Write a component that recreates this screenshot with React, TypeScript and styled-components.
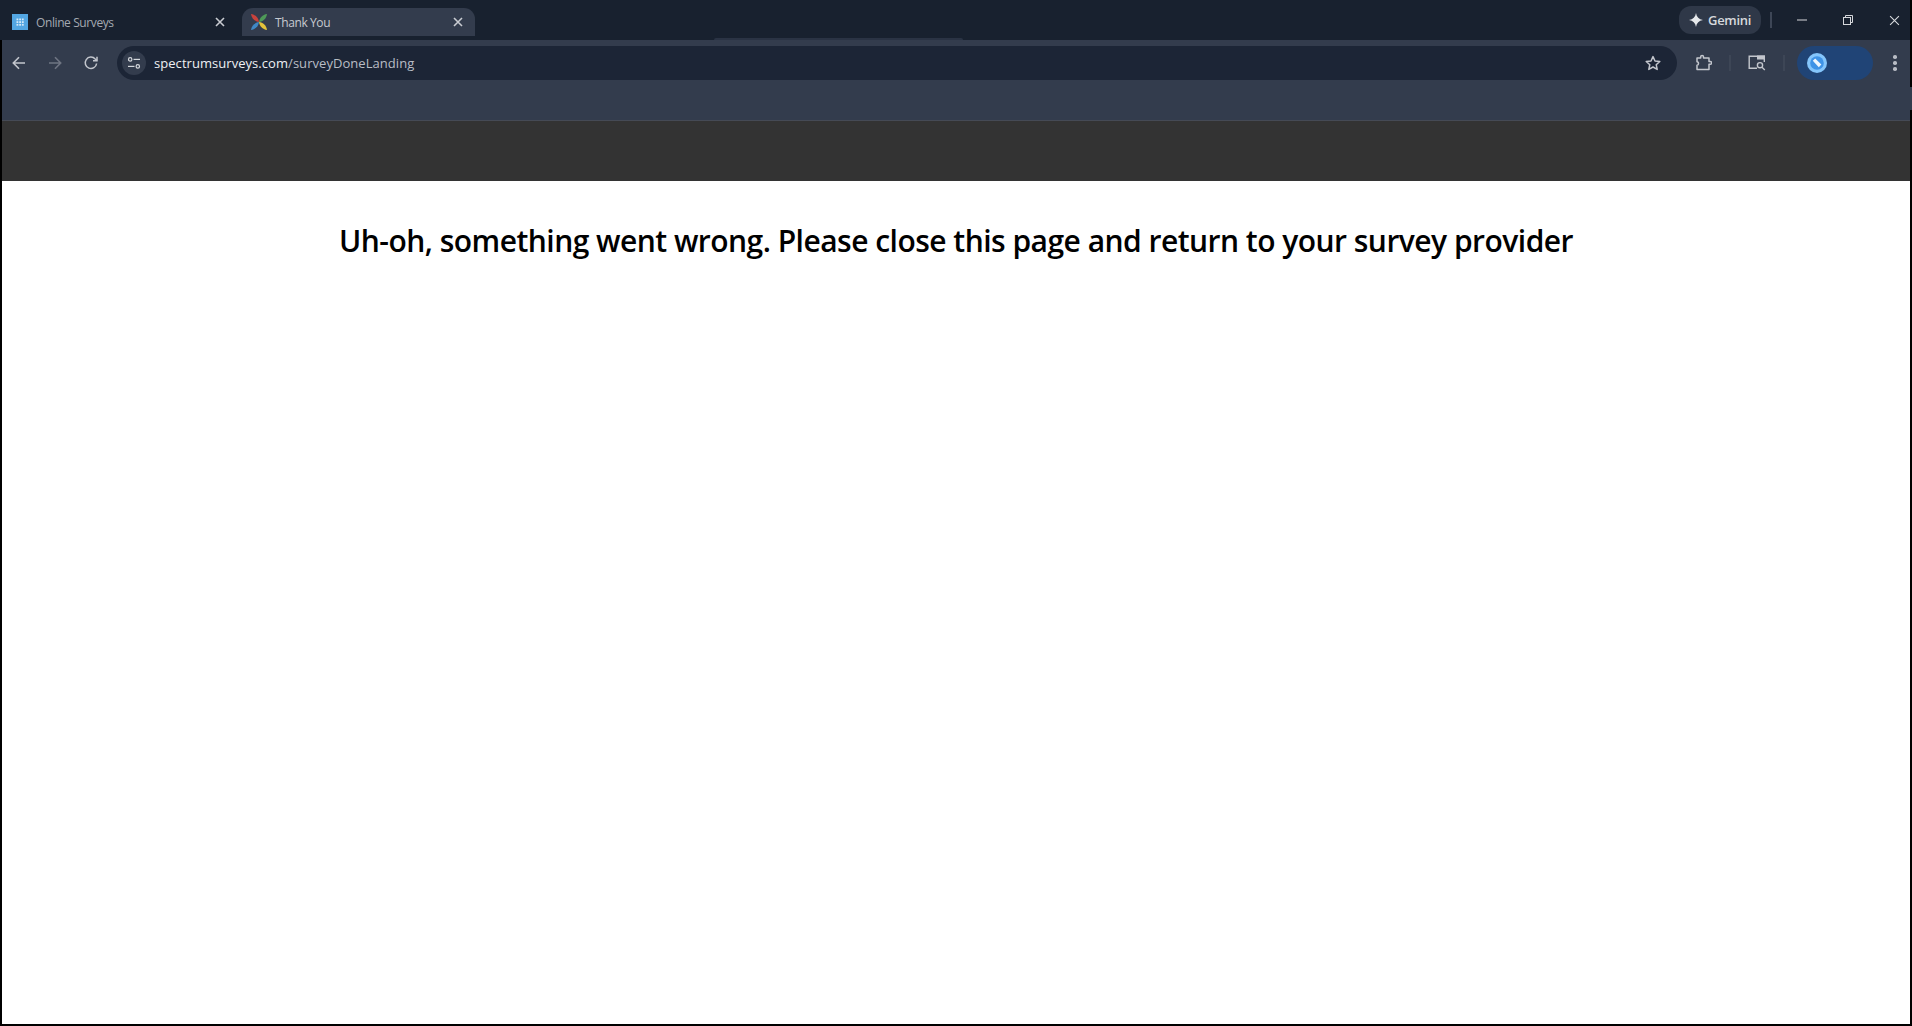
import React from 'react'
import styled, { createGlobalStyle } from "styled-components";

const GlobalStyle = createGlobalStyle`
    html, body {
        margin: 0;
        padding: 0;
        background: #000;
    }
    body {
        font-family: "Open Sans", "Noto Sans", sans-serif;
        overflow: hidden;
    }
`;

const Screen = styled.div`
    position: relative;
    width: 1912px;
    height: 1026px;
    background: #000;
    display: flex;
    flex-direction: column;
    overflow: hidden;

    /* black sliver over the title bar, and the toolbar peeking out on the right */
    &::before {
        content: "";
        position: absolute;
        top: 0;
        left: 1514px;
        width: 398px;
        height: 2px;
        background: #000;
    }
    &::after {
        content: "";
        position: absolute;
        top: 87px;
        right: 0;
        width: 2px;
        height: 23px;
        background: #333c4d;
    }
`;

const TitleBar = styled.div`
    width: 1910px;
    height: 40px;
    flex: none;
    background: #18212f;
    display: flex;
    position: relative;
`;

const TabBump = styled.div`
    position: absolute;
    left: 714px;
    bottom: 0;
    width: 249px;
    height: 2px;
    background: #2a3344;
    border-radius: 2px 2px 0 0;
`;

const Tab = styled.div<{ $active?: boolean }>`
    box-sizing: border-box;
    width: ${(props) => props.$active ? "233px" : "242px"};
    height: 28px;
    margin-top: 8px;
    padding: ${(props) => props.$active ? "0 12px 0 8px" : "0 17px 0 12px"};
    display: flex;
    align-items: center;
    background: ${(props) => props.$active ? "#333c4d" : "transparent"};
    border-radius: 11px 11px 0 0;
    color: ${(props) => props.$active ? "#c7cad0" : "#a4a9b2"};
    font-size: 12px;
    letter-spacing: -0.4px;
`;

const TabTitle = styled.span<{ $active?: boolean }>`
    flex: 1;
    margin-left: ${(props) => props.$active ? "7px" : "8px"};
    white-space: nowrap;
`;

const CaptionArea = styled.div`
    margin-left: auto;
    margin-right: -7px;
    display: flex;
    align-items: center;
    height: 40px;
`;

const GeminiPill = styled.div`
    box-sizing: border-box;
    width: 82px;
    height: 28px;
    border-radius: 12px;
    background: #2f3848;
    color: #d6d8dc;
    display: flex;
    align-items: center;
    gap: 5px;
    padding-left: 10px;
    font-size: 13px;
    font-weight: 600;
    letter-spacing: -0.3px;
`;

const VSep = styled.div`
    width: 2px;
    height: 16px;
    background: #3d4656;
    flex: none;
`;

const CaptionSep = styled(VSep)`
    margin: 0 7px 0 9px;
`;

const CaptionButton = styled.div`
    width: 46px;
    height: 40px;
    display: flex;
    align-items: center;
    justify-content: center;
`;

const ChromeArea = styled.div`
    width: 1908px;
    margin-left: 2px;
    flex: none;
`;

const Toolbar = styled.div`
    box-sizing: border-box;
    height: 80px;
    padding-top: 6px;
    background: #333c4d;
    display: flex;
    align-items: flex-start;
`;

const NavButtons = styled.div`
    display: flex;
    align-items: center;
    height: 34px;
    padding-left: 8px;
    gap: 18px;
    width: 115px;
    flex: none;
    box-sizing: border-box;
`;

const IconBox = styled.div`
    width: 18px;
    height: 18px;
    display: flex;
    align-items: center;
    justify-content: center;
    flex: none;
`;

const Omnibox = styled.div`
    box-sizing: border-box;
    width: 1560px;
    height: 34px;
    flex: none;
    border-radius: 17px;
    background: #1c2536;
    display: flex;
    align-items: center;
    padding: 0 16px 0 5px;
`;

const SiteChip = styled.div`
    width: 24px;
    height: 24px;
    border-radius: 50%;
    background: #333c4d;
    display: flex;
    align-items: center;
    justify-content: center;
    flex: none;
`;

const Url = styled.div`
    flex: 1;
    margin-left: 8px;
    font-size: 13px;
    letter-spacing: 0.05px;
    color: #b9bdc5;
    white-space: nowrap;
`;

const Host = styled.span`
    color: #eef0f3;
`;

const ToolIcons = styled.div`
    display: flex;
    align-items: center;
    height: 34px;
    flex: none;
    margin: 0 12px 0 17px;
`;

const ToolSep = styled(VSep)`
    margin: 0 17px;

    &:last-child {
        margin-right: 0;
    }
`;

const ProfilePill = styled.div`
    box-sizing: border-box;
    width: 76px;
    height: 34px;
    flex: none;
    border-radius: 17px;
    background: #204476;
    display: flex;
    align-items: center;
    padding-left: 10px;
`;

const MenuDots = styled.div`
    margin-left: 15px;
    width: 14px;
    height: 34px;
    flex: none;
    display: flex;
    flex-direction: column;
    align-items: center;
    justify-content: center;
    gap: 2.5px;

    span {
        width: 3.5px;
        height: 3.5px;
        border-radius: 50%;
        background: #b8bcc4;
    }
`;

const BookmarkBand = styled.div`
    height: 60px;
    background: #333333;
    border-top: 1px solid #454a55;
`;

const Page = styled.main`
    width: 1908px;
    height: 843px;
    margin-left: 2px;
    flex: none;
    background: #fff;
    padding-top: 38px;
    box-sizing: border-box;
`;

const Message = styled.h1`
    margin: 0;
    text-align: center;
    font-size: 30px;
    line-height: 44px;
    font-weight: 600;
    letter-spacing: -0.52px;
    color: #000;
`;

const GridFavicon = () => (
    <svg width="16" height="16" viewBox="0 0 16 16">
        <rect width="16" height="16" fill="#53a6e2" />
        {[4.5, 7.2, 9.9].map((y) =>
            [4.5, 7.2, 9.9].map((x) => (
                <rect key={`${x}-${y}`} x={x} y={y} width="1.8" height="1.8" fill="#d5e9f8" />
            ))
        )}
    </svg>
);

const PinwheelFavicon = () => (
    <svg width="18" height="18" viewBox="0 0 18 18">
        <path d="M9 9C5 8.5 1.5 5.5 1 1C5.5 1.5 8.5 5 9 9Z" fill="#c8423c" />
        <path d="M9 9C9.5 5 12.5 1.5 17 1C16.5 5.5 13 8.5 9 9Z" fill="#4e9a58" />
        <path d="M9 9C13 9.5 16.5 12.5 17 17C12.5 16.5 9.5 13 9 9Z" fill="#e3c23a" />
        <path d="M9 9C8.5 13 5.5 16.5 1 17C1.5 12.5 5 9.5 9 9Z" fill="#3f88c5" />
    </svg>
);

const CloseIcon = ({ size = 10, color = "#c9ccd2", weight = 1.6 }: { size?: number; color?: string; weight?: number }) => (
    <svg width={size} height={size} viewBox="0 0 10 10">
        <path d="M1 1L9 9M9 1L1 9" stroke={color} strokeWidth={weight} fill="none" />
    </svg>
);

const BackIcon = ({ color }: { color: string }) => (
    <svg width="16" height="16" viewBox="0 0 16 16" fill="none" stroke={color} strokeWidth="1.6">
        <path d="M14 8H2.5M8 2.2L2.3 8L8 13.8" />
    </svg>
);

const ForwardIcon = ({ color }: { color: string }) => (
    <svg width="16" height="16" viewBox="0 0 16 16" fill="none" stroke={color} strokeWidth="1.6">
        <path d="M2 8H13.5M8 2.2L13.7 8L8 13.8" />
    </svg>
);

const ReloadIcon = () => (
    <svg width="16" height="16" viewBox="0 0 16 16" fill="none" stroke="#c3c6cd" strokeWidth="1.5">
        <path d="M13.6 8.5A5.7 5.7 0 1 1 12.2 4L14 5.6" />
        <path d="M14 1.8V5.8H10" />
    </svg>
);

const TuneIcon = () => (
    <svg width="14" height="14" viewBox="0 0 14 14" fill="none" stroke="#d5d8dd" strokeWidth="1.2">
        <circle cx="3.2" cy="3.4" r="1.7" />
        <path d="M6.5 3.4H13" />
        <circle cx="10.8" cy="10.4" r="1.7" />
        <path d="M1 10.4H7.5" />
    </svg>
);

const StarIcon = () => (
    <svg width="16" height="16" viewBox="0 0 16 16" fill="none" stroke="#c3c6cd" strokeWidth="1.5" strokeLinejoin="round">
        <path d="M8 1.6L10 6L14.8 6.5L11.2 9.7L12.2 14.4L8 12L3.8 14.4L4.8 9.7L1.2 6.5L6 6Z" />
    </svg>
);

const ExtensionIcon = () => (
    <svg width="18" height="18" viewBox="0 0 18 18" fill="none" stroke="#c3c6cd" strokeWidth="1.5" strokeLinejoin="round">
        <path d="M3 4H6.7V2.8A1.4 1.4 0 0 1 9.5 2.8V4H15V7.5H16.2A1.4 1.4 0 0 1 16.2 10.3H15V15.5H3V11.2C5 11.2 5 7.8 3 7.8Z" />
    </svg>
);

const TabSearchIcon = () => (
    <svg width="18" height="16" viewBox="0 0 18 16" fill="none" stroke="#c3c6cd" strokeWidth="1.4">
        <path d="M9 13.3H1.2V1.2H16.3V7" />
        <rect x="9" y="0.5" width="8" height="4" fill="#c3c6cd" stroke="none" />
        <circle cx="12" cy="10.2" r="2.6" />
        <path d="M14 12.3L16.8 15" />
    </svg>
);

const Avatar = () => (
    <svg width="20" height="20" viewBox="0 0 20 20">
        <circle cx="10" cy="10" r="10" fill="#84c5fb" />
        <circle cx="10" cy="10" r="6.8" fill="#3f93e6" />
        <path d="M5.8 7.8L8.2 5.4L11 8.2L14.4 11.4L11.8 14.2L8.8 11Z" fill="#eef6fd" />
    </svg>
);

const SparkIcon = () => (
    <svg width="14" height="14" viewBox="0 0 12 12">
        <path d="M6 0C6.5 3.4 8.6 5.5 12 6C8.6 6.5 6.5 8.6 6 12C5.5 8.6 3.4 6.5 0 6C3.4 5.5 5.5 3.4 6 0Z" fill="#e6e8eb" />
    </svg>
);

const MinimizeIcon = () => (
    <svg width="10" height="10" viewBox="0 0 10 10">
        <path d="M0 5H10" stroke="#d6d8dc" strokeWidth="1" />
    </svg>
);

const RestoreIcon = () => (
    <svg width="10" height="10" viewBox="0 0 10 10" fill="none" stroke="#d6d8dc" strokeWidth="1">
        <rect x="0.5" y="2.5" width="7" height="7" />
        <path d="M2.5 2.5V0.5H9.5V7.5H7.5" />
    </svg>
);

export default function App() {
    return (
        <Screen>
            <GlobalStyle />
            <TitleBar>
                <Tab>
                    <GridFavicon />
                    <TabTitle>Online Surveys</TabTitle>
                    <CloseIcon />
                </Tab>
                <Tab $active>
                    <PinwheelFavicon />
                    <TabTitle $active>Thank You</TabTitle>
                    <CloseIcon />
                </Tab>
                <TabBump />
                <CaptionArea>
                    <GeminiPill>
                        <SparkIcon />
                        Gemini
                    </GeminiPill>
                    <CaptionSep />
                    <CaptionButton><MinimizeIcon /></CaptionButton>
                    <CaptionButton><RestoreIcon /></CaptionButton>
                    <CaptionButton><CloseIcon size={11} color="#d6d8dc" weight={1} /></CaptionButton>
                </CaptionArea>
            </TitleBar>
            <ChromeArea>
                <Toolbar>
                    <NavButtons>
                        <IconBox><BackIcon color="#c3c6cd" /></IconBox>
                        <IconBox><ForwardIcon color="#6f7583" /></IconBox>
                        <IconBox><ReloadIcon /></IconBox>
                    </NavButtons>
                    <Omnibox>
                        <SiteChip><TuneIcon /></SiteChip>
                        <Url><Host>spectrumsurveys.com</Host>/surveyDoneLanding</Url>
                        <StarIcon />
                    </Omnibox>
                    <ToolIcons>
                        <IconBox><ExtensionIcon /></IconBox>
                        <ToolSep />
                        <IconBox><TabSearchIcon /></IconBox>
                        <ToolSep />
                    </ToolIcons>
                    <ProfilePill><Avatar /></ProfilePill>
                    <MenuDots>
                        <span /><span /><span />
                    </MenuDots>
                </Toolbar>
                <BookmarkBand />
            </ChromeArea>
            <Page>
                <Message>Uh-oh, something went wrong. Please close this page and return to your survey provider</Message>
            </Page>
        </Screen>
    )
}
